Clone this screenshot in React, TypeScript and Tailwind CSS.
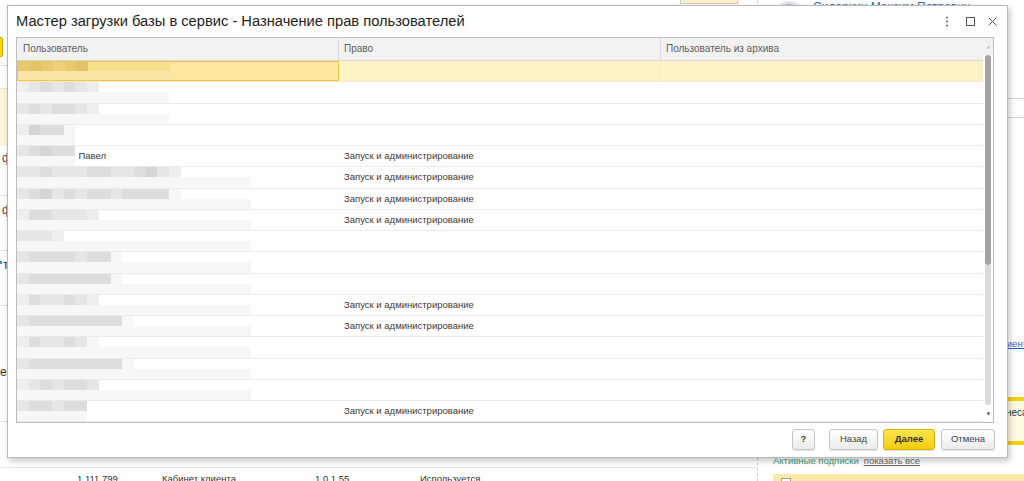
import type { ReactNode } from 'react';

// mosaic tones for the blurred user names
const tone: Record<string, string> = {
  a: 'bg-[#f7f7f7]',
  b: 'bg-[#eeeeee]',
  c: 'bg-[#e6e6e6]',
  d: 'bg-[#dddddd]',
  e: 'bg-[#d5d5d5]',
  p: 'bg-[#efd17b]',
  q: 'bg-[#e8c96e]',
  r: 'bg-[#e2c268]',
  s: 'bg-[#f8df8e]',
  t: 'bg-[#fae6a4]',
};

interface UserRow {
  top: string;
  bot: string;
  name?: string;
  right?: string;
  selected?: boolean;
}

const RIGHT = 'Запуск и администрирование';

const rows: UserRow[] = [
  { top: 'qrqpqrsssssss', bot: 'ttttttttttttt', selected: true },
  { top: 'bcdcdcb', bot: 'aaaaaaaaaaaaa' },
  { top: 'cdcddcb', bot: 'aaaaaaaaaaaaa' },
  { top: 'bedda', bot: 'aaaaa' },
  { top: 'cdedd', bot: 'aaaaa', name: 'Павел', right: RIGHT },
  { top: 'ccdcccddccdecb', bot: 'aaaaaaaaaaaaaaaaaaaa', right: RIGHT },
  { top: 'cdecdcddcdddda', bot: 'aaaaaaaaaaaaaaaaaaaa', right: RIGHT },
  { top: 'bddcccb', bot: 'aaaaaaaaaaaaaaaaaaaa', right: RIGHT },
  { top: 'cccb', bot: 'aaaaaaaaaaaaaaaaaaaa' },
  { top: 'cddddcdda', bot: 'aaaaaaaaaaaaaaaaaaaa' },
  { top: 'cddddddda', bot: 'aaaaaaaaaaaaaaaaaaaa' },
  { top: 'bdccdcb', bot: 'aaaaaaaaaaaaaaaaaaaa', right: RIGHT },
  { top: 'cdddddddda', bot: 'aaaaaaaaaaaaaaaaaaaa', right: RIGHT },
  { top: 'bdccdca', bot: 'aaaaaaaaaaaaaaaaaaaa' },
  { top: 'cdddddddda', bot: 'aaaaaaaaaaaaaaaaaaaa' },
  { top: 'bcdcddc', bot: 'aaaaaaaaaaaaaaaaaaaa' },
  { top: 'cddcdd', bot: 'aaaaaa', right: RIGHT },
];

function Mosaic({ top, bot }: { top: string; bot: string }) {
  return (
    <div className="flex h-full flex-col">
      <div className="flex flex-1">
        {top.split('').map((c, i) => (
          <div key={i} className={`w-[11.7px] ${tone[c]}`} />
        ))}
      </div>
      <div className="flex flex-1">
        {bot.split('').map((c, i) => (
          <div key={i} className={`w-[11.7px] ${tone[c]}`} />
        ))}
      </div>
    </div>
  );
}

function Button({ children, primary, className }: { children: ReactNode; primary?: boolean; className?: string }) {
  return (
    <div
      className={`flex h-[21px] items-center justify-center rounded-[3px] border text-[9.5px] shadow-[0_1px_1px_rgba(0,0,0,0.12)] ${
        primary
          ? 'border-[#d6b200] bg-gradient-to-b from-[#fde44a] to-[#f3cd00] font-bold text-[#333]'
          : 'border-[#c6c6c6] bg-gradient-to-b from-white to-[#ebebeb] text-[#444]'
      } ${className ?? ''}`}
    >
      {children}
    </div>
  );
}

function Dialog() {
  return (
    <div className="absolute left-[7px] top-[5px] flex h-[453px] w-[1001px] flex-col border border-[#b9b9b9] bg-white shadow-[2px_3px_6px_rgba(0,0,0,0.22)]">
      {/* title bar */}
      <div className="flex h-[31px] shrink-0 items-center pl-[8px] pr-[10px]">
        <h1 className="flex-1 text-[14.7px] leading-none text-[#222]">
          Мастер загрузки базы в сервис - Назначение прав пользователей
        </h1>
        <svg width="4" height="11" viewBox="0 0 4 11" className="text-[#777]">
          <circle cx="2" cy="1.5" r="1.1" fill="currentColor" />
          <circle cx="2" cy="5.5" r="1.1" fill="currentColor" />
          <circle cx="2" cy="9.5" r="1.1" fill="currentColor" />
        </svg>
        <svg width="9" height="9" viewBox="0 0 9 9" className="ml-[17px]">
          <rect x="0.5" y="0.5" width="8" height="8" fill="none" stroke="#555" />
        </svg>
        <svg width="9" height="9" viewBox="0 0 9 9" className="ml-[13px]">
          <path d="M0.5 0.5 L8.5 8.5 M8.5 0.5 L0.5 8.5" stroke="#555" strokeWidth="1" />
        </svg>
      </div>

      {/* table */}
      <div className="ml-[8px] flex h-[386px] w-[978px] shrink-0 border border-[#bdbdbd]">
        <div className="flex w-[966px] flex-col">
          <div className="flex h-[23px] shrink-0 items-center border-b border-[#d6d6d6] bg-[#f2f2f2] text-[10px] text-[#5e5e5e]">
            <div className="h-full w-[322px] border-r border-[#dcdcdc] pl-[6px] leading-[22px]">Пользователь</div>
            <div className="h-full w-[322px] border-r border-[#dcdcdc] pl-[5px] leading-[22px]">Право</div>
            <div className="h-full flex-1 pl-[5px] leading-[22px]">Пользователь из архива</div>
          </div>
          <div className="flex-1 overflow-hidden">
            {rows.map((r, i) => (
              <div
                key={i}
                className={`flex h-[21.25px] border-b text-[9.5px] text-[#3a3a3a] ${
                  r.selected ? 'border-[#f4ead0] bg-[#fdf1c6]' : 'border-[#ebebeb]'
                }`}
              >
                <div
                  className={`flex w-[322px] items-stretch ${
                    r.selected ? 'mr-[2px] w-[320px] border border-[#f0c744] bg-[#fde79f]' : ''
                  }`}
                >
                  <Mosaic top={r.top} bot={r.bot} />
                  {r.name && <span className="ml-[3px] self-center">{r.name}</span>}
                </div>
                <div className={`flex w-[322px] items-center pl-[5px] ${r.selected ? 'border-l border-[#fdf6dc]' : ''}`}>
                  {r.right}
                </div>
                <div className={`flex-1 ${r.selected ? 'border-l border-[#fdf6dc]' : ''}`} />
              </div>
            ))}
          </div>
        </div>
        {/* scrollbar */}
        <div className="flex w-[10px] flex-col items-center">
          <div className="flex h-[17px] w-full items-center justify-center bg-[#f2f2f2]">
            <svg width="5" height="4" viewBox="0 0 5 4">
              <path d="M2.5 0.5 L4.5 3.5 L0.5 3.5 Z" fill="#c2c2c2" />
            </svg>
          </div>
          <div className="h-[210px] w-[6px] rounded-[3px] bg-[#a3a3a3]" />
          <div className="h-[140px] w-[6px] rounded-b-[3px] bg-[#dadada]" />
          <div className="flex flex-1 items-center justify-center">
            <svg width="5" height="4" viewBox="0 0 5 4">
              <path d="M0.5 0.5 L4.5 0.5 L2.5 3.5 Z" fill="#555" />
            </svg>
          </div>
        </div>
      </div>

      {/* footer */}
      <div className="flex flex-1 items-start justify-end pr-[12px] pt-[6px]">
        <Button className="w-[23px] font-bold text-[#333]">?</Button>
        <Button className="ml-[14px] w-[49px]">Назад</Button>
        <Button primary className="ml-[5px] w-[52px]">Далее</Button>
        <Button className="ml-[6px] w-[54px]">Отмена</Button>
      </div>
    </div>
  );
}

function Page() {
  return (
    <div className="flex h-full">
      {/* main list behind the dialog */}
      <div className="flex w-[757px] shrink-0 flex-col text-[9.5px] text-[#333]">
        <div className="h-[34px] shrink-0">
          <div className="ml-[680px] h-[4px] w-[58px] border-x border-b border-[#c9c9c9] bg-[#fdf1c2]" />
        </div>
        <div className="h-[32px] shrink-0 border-b border-[#dedede] pt-[3px]">
          <div className="-ml-[40px] h-[20px] w-[43px] rounded-[2px] border border-[#d2ad00] bg-[#f6d20f]" />
        </div>
        <div className="h-[23px] shrink-0 border-b border-[#e2e2e2]" />
        <div className="h-[57px] shrink-0 bg-[#fdf5da]" />
        <div className="h-[50px] shrink-0 border-b border-[#e2e2e2] pl-[2px] pt-[3px] text-[12px] text-[#6b4444]">фирма</div>
        <div className="h-[55px] shrink-0 border-b border-[#e2e2e2] pl-[2px] pt-[5px] text-[12px] text-[#6b4444]">фирма</div>
        <div className="flex h-[55px] shrink-0 items-start border-b border-[#e2e2e2] pt-[5px] text-[12px]">
          <span className="mt-[5px] h-[3px] w-[2px] bg-[#3d8ed8]" />
          <span className="ml-[1px]">тест</span>
        </div>
        <div className="h-[116px] shrink-0 border-b border-[#e2e2e2] pt-[57px] text-[12px]">есть</div>
        <div className="h-[46px] shrink-0 border-b border-[#e2e2e2]" />
        <div className="flex shrink-0 items-start pt-[5px] text-[9.5px] leading-[12px]">
          <span className="w-[77px] text-[#3d8ed8]">.</span>
          <span className="w-[85px]">1 111 799</span>
          <span className="w-[153px]">Кабинет клиента</span>
          <span className="w-[105px]">1.0.1.55</span>
          <span>Используется</span>
        </div>
      </div>

      {/* right side panel */}
      <div className="flex min-w-0 flex-1 flex-col overflow-hidden border-l border-dashed border-[#cfcfcf] pl-[15px] text-[9.5px]">
        <div className="flex h-[40px] shrink-0 items-start">
          <div className="ml-[2px] mt-[1px] h-[28px] w-[28px] shrink-0 rounded-full border-[3px] border-[#dfe5ec] bg-[#a9b6c4]" />
          <span className="-mt-[2px] ml-[10px] whitespace-nowrap text-[12px] text-[#3c6cb4] underline">
            Сидоркин Максим Петрович
          </span>
        </div>
        <div className="h-[58px] shrink-0" />
        <div className="-ml-[15px] h-[20px] shrink-0 border-y border-[#d4d4d4]" />
        <div className="h-[219px] shrink-0" />
        <div className="h-[14px] shrink-0 whitespace-nowrap pl-[224px] leading-[14px] text-[#2c62d6] underline">клиента</div>
        <div className="h-[46px] shrink-0" />
        <div className="h-[48px] shrink-0 whitespace-nowrap border-y-[4px] border-[#f4d10e] bg-[#fffbe3] pl-[217px] pt-[4px] text-[10px] text-[#333]">
          бизнеса
        </div>
        <div className="h-[9px] shrink-0" />
        <div className="flex h-[14px] shrink-0 items-center gap-[5px] whitespace-nowrap">
          <span className="text-[#3f9e79]">Активные подписки</span>
          <span className="text-[#666] underline">показать все</span>
        </div>
        <div className="h-[6px] shrink-0" />
        <div className="flex h-[20px] shrink-0 items-start bg-[#fbe9a6] pl-[8px] pt-[4px]">
          <div className="h-[10px] w-[10px] border border-[#9a9a9a] bg-white" />
        </div>
      </div>
    </div>
  );
}

export default function App() {
  return (
    <div className="relative h-[481px] w-[1024px] overflow-hidden bg-white font-['Liberation_Sans',Arial,sans-serif]">
      <Page />
      <Dialog />
    </div>
  );
}
